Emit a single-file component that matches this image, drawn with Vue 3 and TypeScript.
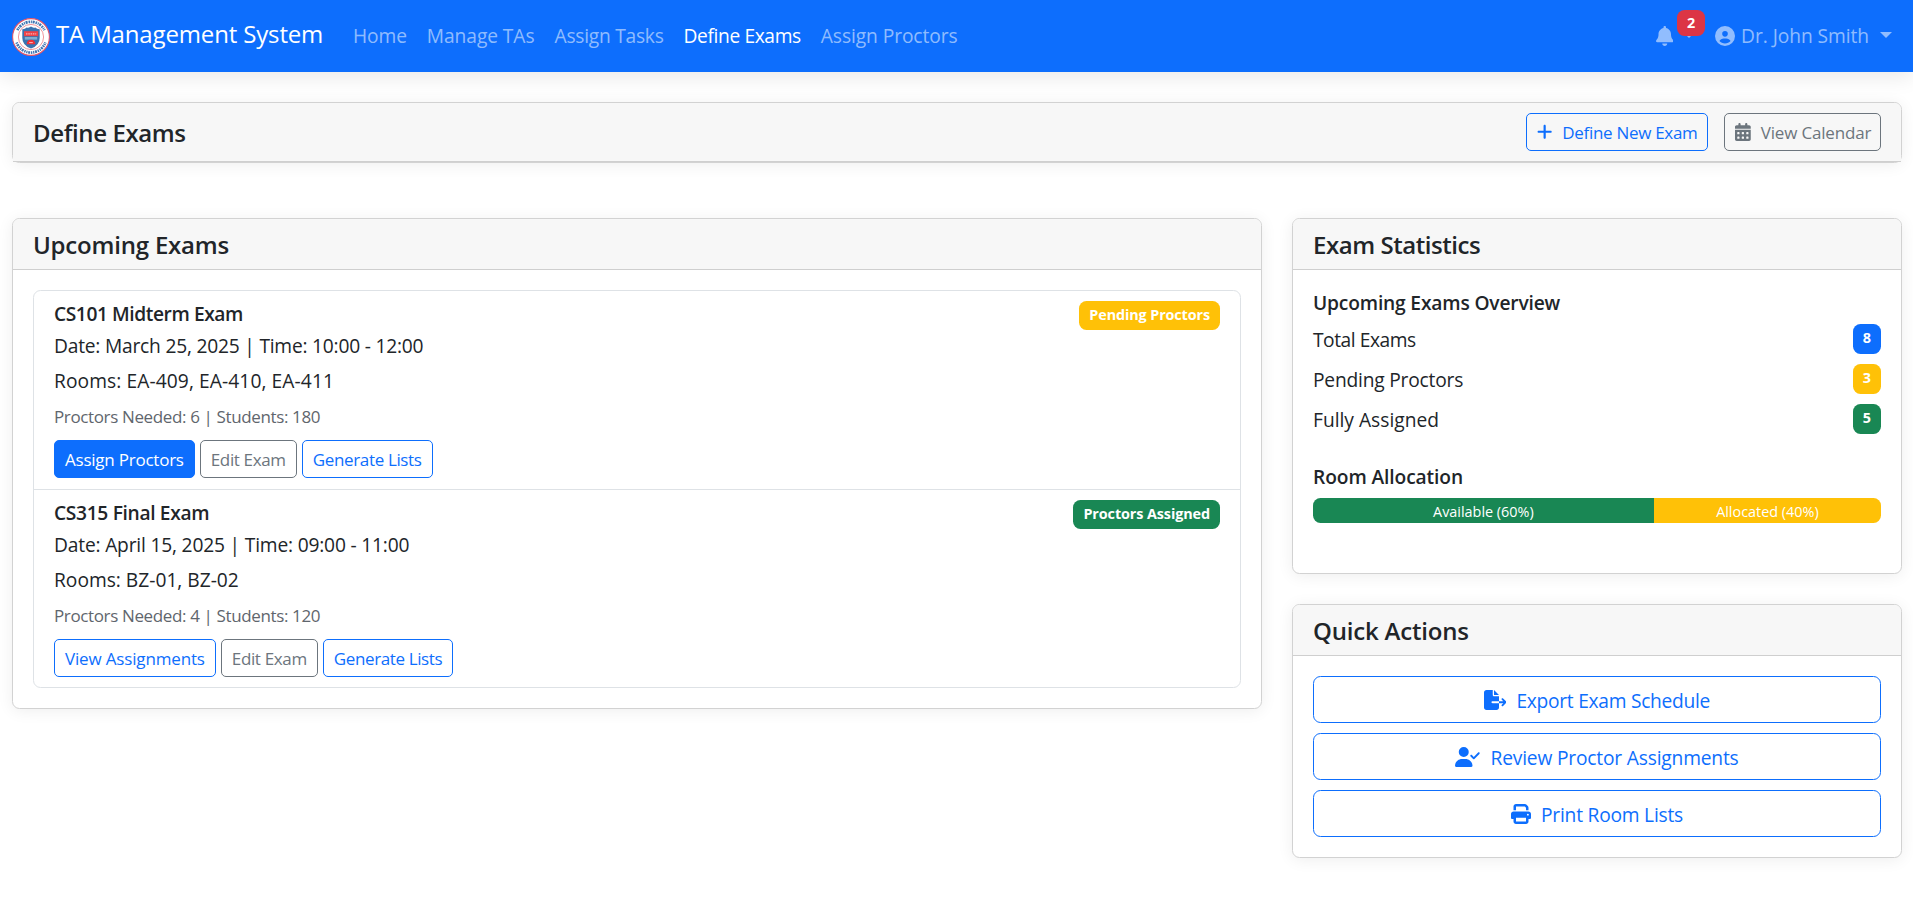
<script setup lang="ts">
interface Label { text: string; track: number }
interface ButtonDef extends Label { kind: 'primary' | 'outline' | 'muted' }
interface Exam {
  title: Label
  date: Label
  rooms: Label
  meta: Label
  status: Label
  tone: 'warning' | 'success'
  buttons: ButtonDef[]
}
interface Action extends Label { viewBox: string; width: number; path: string }

const tracking = (item: Label) => ({ letterSpacing: `${item.track}px` })

const navLinks: (Label & { active?: boolean })[] = [
  { text: 'Home', track: -0.1 },
  { text: 'Manage TAs', track: -0.07 },
  { text: 'Assign Tasks', track: -0.25 },
  { text: 'Define Exams', track: -0.38, active: true },
  { text: 'Assign Proctors', track: -0.08 },
]

const exams: Exam[] = [
  {
    title: { text: 'CS101 Midterm Exam', track: -0.42 },
    date: { text: 'Date: March 25, 2025 | Time: 10:00 - 12:00', track: -0.21 },
    rooms: { text: 'Rooms: EA-409, EA-410, EA-411', track: 0.09 },
    meta: { text: 'Proctors Needed: 6 | Students: 180', track: -0.37 },
    status: { text: 'Pending Proctors', track: -0.12 },
    tone: 'warning',
    buttons: [
      { text: 'Assign Proctors', track: -0.23, kind: 'primary' },
      { text: 'Edit Exam', track: -0.35, kind: 'muted' },
      { text: 'Generate Lists', track: -0.35, kind: 'outline' },
    ],
  },
  {
    title: { text: 'CS315 Final Exam', track: -0.33 },
    date: { text: 'Date: April 15, 2025 | Time: 09:00 - 11:00', track: -0.18 },
    rooms: { text: 'Rooms: BZ-01, BZ-02', track: 0 },
    meta: { text: 'Proctors Needed: 4 | Students: 120', track: -0.37 },
    status: { text: 'Proctors Assigned', track: -0.1 },
    tone: 'success',
    buttons: [
      { text: 'View Assignments', track: -0.16, kind: 'outline' },
      { text: 'Edit Exam', track: -0.35, kind: 'muted' },
      { text: 'Generate Lists', track: -0.38, kind: 'outline' },
    ],
  },
]

const stats = [
  { text: 'Total Exams', track: -0.45, value: 8, tone: 'primary' },
  { text: 'Pending Proctors', track: -0.2, value: 3, tone: 'warning' },
  { text: 'Fully Assigned', track: 0, value: 5, tone: 'success' },
]

const allocation = [
  { text: 'Available (60%)', percent: 60, tone: 'success' },
  { text: 'Allocated (40%)', percent: 40, tone: 'warning' },
]

const actions: Action[] = [
  {
    text: 'Export Exam Schedule', track: -0.27, viewBox: '0 0 576 512', width: 22.5,
    path: 'M0 64C0 28.7 28.7 0 64 0H224V128c0 17.7 14.3 32 32 32H384V288H216c-13.3 0-24 10.7-24 24s10.7 24 24 24H384V448c0 35.3-28.7 64-64 64H64c-35.3 0-64-28.7-64-64V64zM384 336V288H494.1l-39-39c-9.4-9.4-9.4-24.6 0-33.9s24.6-9.4 33.9 0l80 80c9.4 9.4 9.4 24.6 0 33.9l-80 80c-9.4 9.4-24.6 9.4-33.9 0s-9.4-24.6 0-33.9l39-39H384zm0-208H256V0L384 128z',
  },
  {
    text: 'Review Proctor Assignments', track: -0.18, viewBox: '0 0 640 512', width: 25,
    path: 'M96 128a128 128 0 1 1 256 0A128 128 0 1 1 96 128zM0 482.3C0 383.8 79.8 304 178.3 304h91.4C368.2 304 448 383.8 448 482.3c0 16.4-13.3 29.7-29.7 29.7H29.7C13.3 512 0 498.7 0 482.3zM625 177L497 305c-9.4 9.4-24.6 9.4-33.9 0l-64-64c-9.4-9.4-9.4-24.6 0-33.9s24.6-9.4 33.9 0l47 47L591 143c9.4-9.4 24.6-9.4 33.9 0s9.4 24.6 0 33.9z',
  },
  {
    text: 'Print Room Lists', track: -0.22, viewBox: '0 0 512 512', width: 20,
    path: 'M128 0C92.7 0 64 28.7 64 64v96h64V64H354.7L384 93.3V160h64V93.3c0-17-6.7-33.3-18.7-45.3L400 18.7C388 6.7 371.7 0 354.7 0H128zM384 352v32 64H128V384 368 352H384zm64 32h32c17.7 0 32-14.3 32-32V256c0-35.3-28.7-64-64-64H64c-35.3 0-64 28.7-64 64v96c0 17.7 14.3 32 32 32H64v64c0 35.3 28.7 64 64 64H384c35.3 0 64-28.7 64-64V384zM432 248a24 24 0 1 1 0 48 24 24 0 1 1 0-48z',
  },
]
</script>

<template>
  <div class="page">
    <nav class="navbar">
      <a class="brand">
        <svg class="logo" viewBox="0 0 38 38">
          <circle cx="19" cy="19" r="18.4" fill="#fff" stroke="#e0566a" stroke-width="1.1" />
          <path d="M5.4 12.2A15.2 15.2 0 0 1 32.6 12.2" fill="none" stroke="#3d74b3" stroke-width="2.7" stroke-dasharray="1.6 .8 1 .7 2.1 .9" />
          <path d="M4.6 24.6A15.4 15.4 0 0 0 33.4 24.6" fill="none" stroke="#3d74b3" stroke-width="2.7" stroke-dasharray="1.2 .7 2 .8 1.4 .8" />
          <circle cx="19" cy="19" r="12.6" fill="#fff" stroke="#ee8a92" stroke-width=".9" />
          <path d="M10.3 11.2Q13.2 11.3 14.6 9.4Q16.8 10.4 19 8.6Q21.2 10.4 23.4 9.4Q24.8 11.3 27.7 11.2V20Q27.7 27.4 19 30.6Q10.3 27.4 10.3 20Z" fill="#3973b0" />
          <path d="M12.8 19H25.2V21.6H12.8Z" fill="#7eaed0" />
          <path d="M12 13.2H26.2V18.2H12Z" fill="#ee4248" />
          <path d="M14 15.8H24.2" stroke="#f9b2b4" stroke-width="1.2" stroke-dasharray="1.5 .8" />
          <path d="M14.6 26.2Q15 21.8 19 21.8T23.4 26.2Z" fill="#ee3038" />
          <path d="M17.2 24.6H20.8" stroke="#ffb8ba" stroke-width="1" />
        </svg>
        <span>TA Management System</span>
      </a>
      <div class="links">
        <a v-for="link in navLinks" :key="link.text" class="nav-link" :class="{ active: link.active }" :style="tracking(link)">{{ link.text }}</a>
      </div>
      <div class="account">
        <a class="nav-link bell">
          <svg width="17.5" height="20" viewBox="0 0 448 512"><path fill="currentColor" d="M224 0c-17.7 0-32 14.3-32 32V51.2C119 66 64 130.6 64 208v18.8c0 47-17.3 92.4-48.5 127.6l-7.4 8.3c-8.4 9.4-10.4 22.9-5.3 34.4S19.4 416 32 416H416c12.6 0 24-7.4 29.2-18.9s3.1-25-5.3-34.4l-7.4-8.3C401.3 319.2 384 273.9 384 226.8V208c0-77.4-55-142-128-156.8V32c0-17.7-14.3-32-32-32zm45.3 493.3c12-12 18.7-28.3 18.7-45.3H224 160c0 17 6.7 33.3 18.7 45.3s28.3 18.7 45.3 18.7s33.3-6.7 45.3-18.7z" /></svg>
          <i class="caret"></i>
          <span class="badge danger notice">2</span>
        </a>
        <a class="nav-link user">
          <svg width="20" height="20" viewBox="0 0 512 512"><path fill="currentColor" d="M399 384.2C376.9 345.8 335.4 320 288 320H224c-47.4 0-88.9 25.8-111 64.2c35.2 39.2 86.2 63.8 143 63.8s107.8-24.7 143-63.8zM0 256a256 256 0 1 1 512 0A256 256 0 1 1 0 256zm256 16a72 72 0 1 0 0-144 72 72 0 1 0 0 144z" /></svg>
          <span>Dr. John Smith</span>
          <i class="caret"></i>
        </a>
      </div>
    </nav>

    <main class="content">
      <section class="card toolbar">
        <header class="card-header">
          <h5>Define Exams</h5>
          <div class="tools">
            <button class="btn small outline tool-new">
              <svg width="15.3" height="17.5" viewBox="0 0 448 512"><path fill="currentColor" d="M256 80c0-17.7-14.3-32-32-32s-32 14.3-32 32V224H48c-17.7 0-32 14.3-32 32s14.3 32 32 32H192V432c0 17.7 14.3 32 32 32s32-14.3 32-32V288H400c17.7 0 32-14.3 32-32s-14.3-32-32-32H256V80z" /></svg>
              <span>Define New Exam</span>
            </button>
            <button class="btn small muted tool-calendar">
              <svg width="15.75" height="18" viewBox="0 0 448 512"><path fill="currentColor" d="M128 0c17.7 0 32 14.3 32 32V64H288V32c0-17.7 14.3-32 32-32s32 14.3 32 32V64h48c26.5 0 48 21.5 48 48v48H0V112C0 85.5 21.5 64 48 64H96V32c0-17.7 14.3-32 32-32zM0 192H448V464c0 26.5-21.5 48-48 48H48c-26.5 0-48-21.5-48-48V192zm64 80v32c0 8.8 7.2 16 16 16h32c8.8 0 16-7.2 16-16V272c0-8.8-7.2-16-16-16H80c-8.8 0-16 7.2-16 16zm128 0v32c0 8.8 7.2 16 16 16h32c8.8 0 16-7.2 16-16V272c0-8.8-7.2-16-16-16H208c-8.8 0-16 7.2-16 16zm144-16c-8.8 0-16 7.2-16 16v32c0 8.8 7.2 16 16 16h32c8.8 0 16-7.2 16-16V272c0-8.8-7.2-16-16-16H336zM64 400v32c0 8.8 7.2 16 16 16h32c8.8 0 16-7.2 16-16V400c0-8.8-7.2-16-16-16H80c-8.8 0-16 7.2-16 16zm144-16c-8.8 0-16 7.2-16 16v32c0 8.8 7.2 16 16 16h32c8.8 0 16-7.2 16-16V400c0-8.8-7.2-16-16-16H208zm112 16v32c0 8.8 7.2 16 16 16h32c8.8 0 16-7.2 16-16V400c0-8.8-7.2-16-16-16H336c-8.8 0-16 7.2-16 16z" /></svg>
              <span>View Calendar</span>
            </button>
          </div>
        </header>
      </section>

      <div class="columns">
        <section class="card">
          <header class="card-header"><h5>Upcoming Exams</h5></header>
          <div class="card-body">
            <ul class="exam-list">
              <li v-for="exam in exams" :key="exam.title.text" class="exam">
                <div class="exam-head">
                  <h6 :style="tracking(exam.title)">{{ exam.title.text }}</h6>
                  <span class="badge" :class="exam.tone" :style="tracking(exam.status)">{{ exam.status.text }}</span>
                </div>
                <p :style="tracking(exam.date)">{{ exam.date.text }}</p>
                <p :style="tracking(exam.rooms)">{{ exam.rooms.text }}</p>
                <small :style="tracking(exam.meta)">{{ exam.meta.text }}</small>
                <div class="exam-buttons">
                  <button v-for="b in exam.buttons" :key="b.text" class="btn small" :class="b.kind" :style="tracking(b)">{{ b.text }}</button>
                </div>
              </li>
            </ul>
          </div>
        </section>

        <aside class="side">
          <section class="card stats">
            <header class="card-header"><h5>Exam Statistics</h5></header>
            <div class="card-body">
              <h6 class="overview">Upcoming Exams Overview</h6>
              <ul class="stat-list">
                <li v-for="s in stats" :key="s.text">
                  <span class="stat-name" :style="tracking(s)">{{ s.text }}</span>
                  <span class="badge" :class="s.tone">{{ s.value }}</span>
                </li>
              </ul>
              <h6>Room Allocation</h6>
              <div class="progress">
                <div v-for="a in allocation" :key="a.text" :class="a.tone" :style="{ width: a.percent + '%' }">{{ a.text }}</div>
              </div>
            </div>
          </section>

          <section class="card">
            <header class="card-header"><h5>Quick Actions</h5></header>
            <div class="card-body actions">
              <button v-for="a in actions" :key="a.text" class="btn outline">
                <svg :width="a.width" height="20" :viewBox="a.viewBox"><path fill="currentColor" :d="a.path" /></svg>
                <span :style="tracking(a)">{{ a.text }}</span>
              </button>
            </div>
          </section>
        </aside>
      </div>
    </main>
  </div>
</template>

<style>
body {
  background: #fff;
}
</style>

<style scoped>
* {
  box-sizing: border-box;
}
.page {
  min-height: 908px;
  overflow: hidden;
  font: 400 19.2px/30px "Open Sans", "Noto Sans", sans-serif;
  color: #212529;
}
h5, h6, p, ul {
  margin: 0;
  padding: 0;
}
ul {
  list-style: none;
}
svg {
  flex: none;
  display: block;
}
h5 {
  padding-top: 2px;
  font-size: 24px;
  line-height: 30px;
  font-weight: 600;
  letter-spacing: -0.2px;
}
h6 {
  height: 24px;
  font-size: 19.2px;
  line-height: 26px;
  font-weight: 600;
  letter-spacing: -0.1px;
}

/* Navigation */
.navbar {
  display: flex;
  align-items: center;
  height: 72px;
  padding: 0 11px 0 12px;
  background: #0d6efd;
  box-shadow: 0 5px 20px rgba(0, 0, 0, 0.09);
}
.brand {
  display: flex;
  align-items: center;
  gap: 6px;
  width: 331px;
  color: #fff;
  font-size: 24px;
  letter-spacing: -0.15px;
  white-space: nowrap;
}
.brand span {
  padding-bottom: 5px;
}
.logo {
  width: 38px;
  height: 38px;
  margin-top: 2px;
}
.links, .account {
  display: flex;
}
.account {
  margin-left: auto;
}
.nav-link {
  display: flex;
  align-items: center;
  padding: 10px;
  color: rgba(255, 255, 255, 0.55);
  white-space: nowrap;
}
.nav-link.active {
  color: #fff;
}
.bell {
  position: relative;
}
.user span {
  margin-left: 6px;
  letter-spacing: -0.06px;
}
.caret {
  margin: 0 0 2px 11px;
  border: 6px solid transparent;
  border-top-color: currentColor;
  border-bottom: 0;
}
.bell .caret {
  margin-left: 10px;
}

/* Badges */
.badge {
  display: block;
  padding: 6px 10px 0;
  border-radius: 7.5px;
  color: #fff;
  font-size: 14.4px;
  line-height: 16px;
  font-weight: 700;
}
.notice {
  position: absolute;
  top: -1px;
  left: 31.5px;
  height: 26px;
  padding-top: 4.5px;
}
.primary {
  background: #0d6efd;
}
.warning {
  background: #ffc107;
}
.success {
  background: #198754;
}
.danger {
  background: #dc3545;
}

/* Cards */
.content {
  padding: 30px 11px 0 12px;
}
.card {
  border: 1px solid #d2d2d2;
  border-radius: 7.5px;
  background: #fff;
  box-shadow: 0 2px 16px rgba(0, 0, 0, 0.07);
}
.card-header {
  display: flex;
  align-items: center;
  justify-content: space-between;
  height: 51px;
  padding: 0 20px;
  border-bottom: 1px solid #cfcfcf;
  border-radius: 6.5px 6.5px 0 0;
  background: #f7f7f7;
}
.card-body {
  padding: 20px;
}
.toolbar .card-header {
  height: 59px;
}
.toolbar h5 {
  letter-spacing: -0.38px;
}
.tools {
  display: flex;
  gap: 16px;
}
.tools .btn {
  justify-content: flex-start;
}
.tool-new {
  width: 182px;
  letter-spacing: -0.3px;
}
.tool-calendar {
  width: 157px;
  letter-spacing: -0.18px;
}
.tools span, .actions span {
  margin-left: 10px;
  padding-top: 2px;
}
.columns {
  display: grid;
  grid-template-columns: 1250px 1fr;
  gap: 30px;
  align-items: start;
  margin-top: 55px;
}

/* Buttons */
.btn {
  display: flex;
  align-items: center;
  justify-content: center;
  height: 47px;
  padding: 0 10px;
  border: 1px solid #0d6efd;
  border-radius: 7.5px;
  background: transparent;
  color: #0d6efd;
  font: inherit;
  white-space: nowrap;
}
.btn.small {
  height: 38px;
  border-radius: 5px;
  font-size: 17px;
}
.btn.muted {
  border-color: #6c757d;
  color: #6c757d;
}
.btn.primary {
  background: #0d6efd;
  color: #fff;
}

/* Exam list */
.exam-list {
  border: 1px solid #dee2e6;
  border-radius: 7.5px;
}
.exam {
  padding: 10px 20px;
}
.exam + .exam {
  border-top: 1px solid #dee2e6;
}
.exam-head {
  display: flex;
  justify-content: space-between;
  height: 29px;
}
.exam p {
  height: 35px;
  line-height: 32px;
}
.exam small {
  display: block;
  height: 40px;
  color: #5f666d;
  font-size: 17px;
  line-height: 33px;
}
.exam-buttons {
  display: flex;
  gap: 5px;
  height: 38.5px;
}
.exam-buttons .btn {
  padding-top: 2px;
}

/* Statistics */
.side {
  display: grid;
  gap: 30px;
}
.stats {
  height: 356px;
}
.stats h5 {
  letter-spacing: -0.45px;
}
.stats h6 {
  margin-bottom: 10px;
}
.stats .overview {
  letter-spacing: -0.17px;
}
.stat-list {
  margin-bottom: 30px;
}
.stat-list li {
  display: flex;
  justify-content: space-between;
  height: 30px;
}
.stat-list li + li {
  margin-top: 10px;
}
.stat-name {
  line-height: 32px;
}
.progress {
  display: flex;
  height: 25px;
  overflow: hidden;
  border-radius: 7.5px;
  color: #fff;
  font-size: 14.4px;
  line-height: 27px;
  text-align: center;
}
.actions {
  display: grid;
  gap: 10px;
}
</style>
